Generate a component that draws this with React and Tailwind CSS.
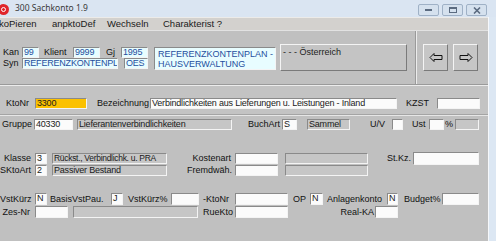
import React from "react";

const sunken = "border border-t-[#8a8a8a] border-l-[#8a8a8a] border-b-[#f4f4f4] border-r-[#f4f4f4]";
const raised = "border border-t-[#f4f4f4] border-l-[#f4f4f4] border-b-[#7a7a7a] border-r-[#7a7a7a]";

const Box = ({ w, h = "h-[11px]", kind = "white", children }) => {
    const bg =
        kind === "white" ? "bg-[#fbfbfb] text-[#1a1a1a]" :
        kind === "cyan" ? "bg-[#e8fdff] text-[#1f4f9e]" :
        kind === "orange" ? "bg-[#fbc100] text-[#1a1a1a]" :
        "bg-[#c6c6c6] text-[#1a1a1a]";
    return (
        <div className={`${w} ${h} ${bg} ${sunken} shrink-0 pl-[1px] leading-[9px] tracking-[-0.2px] whitespace-nowrap overflow-hidden`}>
            {children}
        </div>
    );
};

const L = ({ w, right, pad, children }) => (
    <span className={`${w} ${pad || ""} ${right ? "text-right" : "text-left"} shrink-0 whitespace-nowrap leading-[11px]`}>
        {children}
    </span>
);

const Arrow = ({ dir }) => (
    <svg width="14" height="9" viewBox="0 0 14 9">
        {dir === "left" ? (
            <path d="M1 4.5 L5 0.5 L5 2.5 L13 2.5 L13 6.5 L5 6.5 L5 8.5 Z" fill="none" stroke="#111" strokeWidth="1" />
        ) : (
            <path d="M13 4.5 L9 0.5 L9 2.5 L1 2.5 L1 6.5 L9 6.5 L9 8.5 Z" fill="none" stroke="#111" strokeWidth="1" />
        )}
    </svg>
);

const WinBtn = ({ children }) => (
    <div className="w-[21px] h-[12px] rounded-[2px] border border-[#9fb1c6] bg-[#d5e1ee] flex items-center justify-center">
        {children}
    </div>
);

export default function App() {
    return (
        <div className="w-[496px] h-[241px] overflow-hidden bg-[#dbe6f2] font-['Liberation_Sans',Arial,sans-serif] text-[9px] text-[#111] flex flex-col">
            {/* title bar */}
            <div className="h-[17px] flex items-center shrink-0 bg-[#dae5f2]">
                <div className="w-[11px] h-[11px] rounded-full bg-[#e0262b] ml-[-2px] mt-[1px] flex items-center justify-center">
                    <div className="w-[5px] h-[5px] rounded-full border border-white"></div>
                </div>
                <span className="ml-[6px] font-['Noto_Sans',sans-serif] text-[8.5px] text-[#3a3a3a]">300 Sachkonto 1.9</span>
                <div className="ml-auto mr-[9px] flex gap-[3px] mt-[3px]">
                    <WinBtn><div className="w-[7px] h-[2px] bg-[#5b6b80]"></div></WinBtn>
                    <WinBtn><div className="w-[8px] h-[6px] border border-[#5b6b80] border-t-2"></div></WinBtn>
                    <WinBtn>
                        <svg width="8" height="7" viewBox="0 0 8 7"><path d="M1 0.5 L7 6.5 M7 0.5 L1 6.5" stroke="#5b6b80" strokeWidth="1.6" /></svg>
                    </WinBtn>
                </div>
            </div>

            <div className="flex flex-1">
                {/* client area */}
                <div className="w-[488px] flex flex-col bg-[#c0c0c0]">
                    {/* menu */}
                    <div className="h-[13px] shrink-0 bg-[#d3d1ce] border-t border-[#ecebe9] flex items-center text-[9.5px] text-[#1a1a1a]">
                        <span className="ml-[-1px] w-[53px]">koPieren</span>
                        <span className="w-[55px]">anpktoDef</span>
                        <span className="w-[56px]">Wechseln</span>
                        <span>Charakterist ?</span>
                    </div>

                    {/* top panel */}
                    <div className="h-[54px] shrink-0 flex border-t border-[#e2e2e2]">
                        <div className="w-[415px] flex items-start pt-[13px]">
                            <div className="mt-[3px] flex flex-col">
                                <div className="flex items-center h-[11px]">
                                    <L w="w-[22px]" pad="pl-[3px]">Kan</L>
                                    <Box w="w-[17px]" kind="cyan">99</Box>
                                    <L w="w-[34px]" pad="pl-[5px]">Klient</L>
                                    <Box w="w-[27px]" kind="cyan">9999</Box>
                                    <L w="w-[21px]" pad="pl-[6px]">Gj</L>
                                    <Box w="w-[27px]" kind="cyan">1995</Box>
                                </div>
                                <div className="flex items-center h-[11px]">
                                    <L w="w-[22px]" pad="pl-[3px]">Syn</L>
                                    <Box w="w-[96px]" kind="cyan">REFERENZKONTENPLAN</Box>
                                    <div className="w-[6px]"></div>
                                    <Box w="w-[24px]" kind="cyan">OES</Box>
                                </div>
                            </div>
                            <div className={`ml-[6px] mt-[3px] w-[122px] h-[23px] bg-[#e8fdff] text-[#1f4f9e] ${sunken} pl-[3px] pt-[1px] leading-[10px] whitespace-nowrap overflow-hidden`}>
                                <div>REFERENZKONTENPLAN -</div>
                                <div>HAUSVERWALTUNG</div>
                            </div>
                            <div className={`ml-[4px] w-[127px] h-[27px] bg-[#c4c4c4] ${raised} pl-[2px] pt-[2px] leading-[10px] text-[#222]`}>
                                - - - Österreich
                            </div>
                        </div>
                        <div className="w-[2px] border-l border-[#9a9a9a] border-r border-r-[#ececec]"></div>
                        <div className="flex items-start pt-[13px] pl-[6px] gap-[5px]">
                            <div className={`w-[25px] h-[27px] bg-[#c6c6c6] ${raised} flex items-center justify-center`}><Arrow dir="left" /></div>
                            <div className={`w-[25px] h-[27px] bg-[#c6c6c6] ${raised} flex items-center justify-center`}><Arrow dir="right" /></div>
                        </div>
                    </div>
                    <div className="h-[1px] bg-[#9a9a9a] shrink-0"></div>
                    <div className="h-[1px] bg-[#ececec] shrink-0"></div>

                    {/* KtoNr band */}
                    <div className="h-[28px] shrink-0 pt-[12px] bg-[#c3c3c3]">
                        <div className="flex items-center h-[11px]">
                            <L w="w-[35px]" pad="pl-[6px]">KtoNr</L>
                            <Box w="w-[52px]" kind="orange">3300</Box>
                            <L w="w-[63px]" pad="pl-[10px]">Bezeichnung</L>
                            <Box w="w-[247px]">Verbindlichkeiten aus Lieferungen u. Leistungen - Inland</Box>
                            <L w="w-[40px]" pad="pl-[9px]">KZST</L>
                            <Box w="w-[43px]"></Box>
                        </div>
                    </div>
                    <div className="h-[1px] bg-[#a4a4a4] shrink-0"></div>
                    <div className="h-[1px] bg-[#e6e6e6] shrink-0"></div>

                    {/* Gruppe */}
                    <div className="flex items-center h-[11px] mt-[3px]">
                        <L w="w-[34px]" pad="pl-[2px]">Gruppe</L>
                        <Box w="w-[39px]">40330</Box>
                        <div className="w-[4px]"></div>
                        <Box w="w-[155px]" kind="grey">Lieferantenverbindlichkeiten</Box>
                        <L w="w-[50px]" pad="pl-[16px]">BuchArt</L>
                        <Box w="w-[15px]">S</Box>
                        <div className="w-[10px]"></div>
                        <Box w="w-[43px]" kind="grey">Sammel</Box>
                        <L w="w-[42px]" pad="pl-[20px]">U/V</L>
                        <Box w="w-[11px]"></Box>
                        <L w="w-[26px]" pad="pl-[9px]">Ust</L>
                        <Box w="w-[15px]"></Box>
                        <L w="w-[11px]" pad="pl-[1px]">%</L>
                        <Box w="w-[24px]" kind="grey"></Box>
                    </div>

                    {/* Klasse */}
                    <div className="flex items-center h-[11px] mt-[23px]">
                        <L w="w-[31px]" right>Klasse</L>
                        <div className="w-[4px]"></div>
                        <Box w="w-[12px]">3</Box>
                        <div className="w-[5px]"></div>
                        <Box w="w-[115px]" kind="grey"><span className="text-[8.5px] tracking-[-0.3px]">Rückst., Verbindlichk. u. PRA</span></Box>
                        <L w="w-[68px]" right pad="pr-[4px]">Kostenart</L>
                        <Box w="w-[43px]"></Box>
                        <div className="w-[7px]"></div>
                        <Box w="w-[83px]" kind="grey"></Box>
                        <L w="w-[45px]" right pad="pr-[2px]">St.Kz.</L>
                        <Box w="w-[66px]" h="h-[13px]"></Box>
                    </div>
                    <div className="flex items-center h-[11px] mt-[1px]">
                        <L w="w-[31px]" right>SKtoArt</L>
                        <div className="w-[4px]"></div>
                        <Box w="w-[12px]">2</Box>
                        <div className="w-[5px]"></div>
                        <Box w="w-[115px]" kind="grey">Passiver Bestand</Box>
                        <L w="w-[68px]" right pad="pr-[3px]">Fremdwäh.</L>
                        <Box w="w-[43px]"></Box>
                        <div className="w-[7px]"></div>
                        <Box w="w-[83px]" kind="grey"></Box>
                    </div>

                    {/* VstKürz */}
                    <div className="flex items-center h-[12px] mt-[17px]">
                        <L w="w-[31px]" right pad="pr-[1px]">VstKürz</L>
                        <div className="w-[4px]"></div>
                        <Box w="w-[12px]" h="h-[12px]">N</Box>
                        <L w="w-[64px]" pad="pl-[3px]">BasisVstPau.</L>
                        <Box w="w-[12px]" h="h-[12px]">J</Box>
                        <L w="w-[48px]" pad="pl-[5px]">VstKürz%</L>
                        <Box w="w-[28px]" h="h-[12px]"></Box>
                        <L w="w-[36px]" pad="pl-[4px]">-KtoNr</L>
                        <Box w="w-[53px]" h="h-[12px]"></Box>
                        <L w="w-[22px]" pad="pl-[5px]">OP</L>
                        <Box w="w-[13px]" h="h-[12px]">N</Box>
                        <L w="w-[64px]" pad="pl-[4px]">Anlagenkonto</L>
                        <Box w="w-[11px]" h="h-[12px]">N</Box>
                        <L w="w-[44px]" pad="pl-[6px]">Budget%</L>
                        <Box w="w-[37px]" h="h-[12px]"></Box>
                    </div>
                    <div className="flex items-center h-[12px] mt-[1px]">
                        <L w="w-[31px]" right pad="pr-[1px]">Zes-Nr</L>
                        <div className="w-[4px]"></div>
                        <Box w="w-[33px]" h="h-[12px]"></Box>
                        <div className="w-[5px]"></div>
                        <Box w="w-[125px]" h="h-[12px]" kind="grey"></Box>
                        <L w="w-[37px]" pad="pl-[5px]">RueKto</L>
                        <Box w="w-[53px]" h="h-[12px]"></Box>
                        <L w="w-[87px]" right pad="pr-[1px]">Real-KA</L>
                        <Box w="w-[23px]" h="h-[12px]"></Box>
                    </div>
                </div>
                {/* right frame */}
                <div className="w-[1px] bg-[#f6f8fb]"></div>
                <div className="flex-1 bg-[#dce7f3]"></div>
            </div>
        </div>
    );
}
